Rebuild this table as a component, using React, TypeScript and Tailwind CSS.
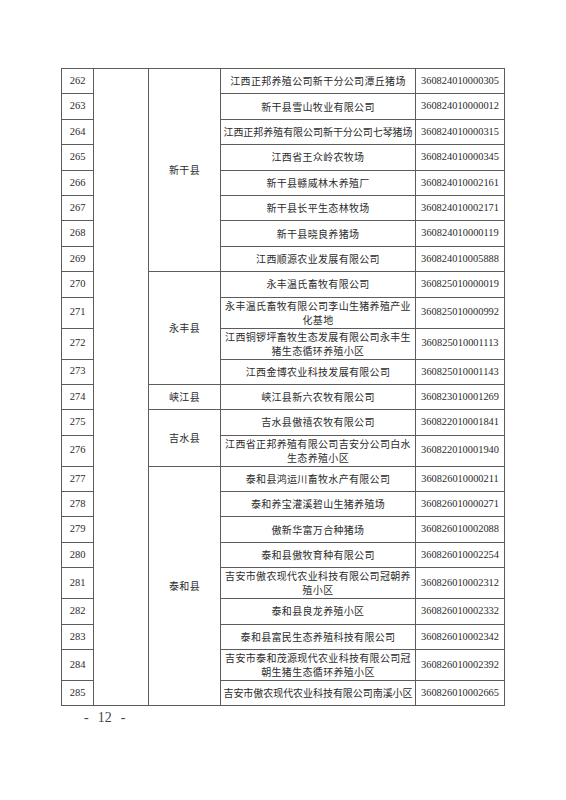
type Row = {
  no: number;
  name: string[];
  code: string;
  tight?: boolean;
};

type Group = {
  county: string;
  rows: Row[];
};

const groups: Group[] = [
  {
    county: "新干县",
    rows: [
      { no: 262, name: ["江西正邦养殖公司新干分公司潭丘猪场"], code: "360824010000305" },
      { no: 263, name: ["新干县雪山牧业有限公司"], code: "360824010000012" },
      { no: 264, name: ["江西正邦养殖有限公司新干分公司七琴猪场"], code: "360824010000315", tight: true },
      { no: 265, name: ["江西省王众岭农牧场"], code: "360824010000345" },
      { no: 266, name: ["新干县赣威林木养殖厂"], code: "360824010002161" },
      { no: 267, name: ["新干县长平生态林牧场"], code: "360824010002171" },
      { no: 268, name: ["新干县晓良养猪场"], code: "360824010000119" },
      { no: 269, name: ["江西顺源农业发展有限公司"], code: "360824010005888" },
    ],
  },
  {
    county: "永丰县",
    rows: [
      { no: 270, name: ["永丰温氏畜牧有限公司"], code: "360825010000019" },
      { no: 271, name: ["永丰温氏畜牧有限公司李山生猪养殖产业", "化基地"], code: "360825010000992" },
      { no: 272, name: ["江西铜锣坪畜牧生态发展有限公司永丰生", "猪生态循环养殖小区"], code: "360825010001113" },
      { no: 273, name: ["江西金博农业科技发展有限公司"], code: "360825010001143" },
    ],
  },
  {
    county: "峡江县",
    rows: [{ no: 274, name: ["峡江县新六农牧有限公司"], code: "360823010001269" }],
  },
  {
    county: "吉水县",
    rows: [
      { no: 275, name: ["吉水县傲禧农牧有限公司"], code: "360822010001841" },
      { no: 276, name: ["江西省正邦养殖有限公司吉安分公司白水", "生态养殖小区"], code: "360822010001940" },
    ],
  },
  {
    county: "泰和县",
    rows: [
      { no: 277, name: ["泰和县鸿运川畜牧水产有限公司"], code: "360826010000211" },
      { no: 278, name: ["泰和养宝灌溪碧山生猪养殖场"], code: "360826010000271" },
      { no: 279, name: ["傲新华富万合种猪场"], code: "360826010002088" },
      { no: 280, name: ["泰和县傲牧育种有限公司"], code: "360826010002254" },
      { no: 281, name: ["吉安市傲农现代农业科技有限公司冠朝养", "殖小区"], code: "360826010002312" },
      { no: 282, name: ["泰和县良龙养殖小区"], code: "360826010002332" },
      { no: 283, name: ["泰和县富民生态养殖科技有限公司"], code: "360826010002342" },
      { no: 284, name: ["吉安市泰和茂源现代农业科技有限公司冠", "朝生猪生态循环养殖小区"], code: "360826010002392" },
      { no: 285, name: ["吉安市傲农现代农业科技有限公司南溪小区"], code: "360826010002665", tight: true },
    ],
  },
];

const totalRows = groups.reduce((n, g) => n + g.rows.length, 0);

const cjk = "font-['Noto_Sans_CJK_SC','Noto_Sans_CJK_JP',sans-serif]";
const serif = "font-['Liberation_Serif','Times_New_Roman',serif]";
const cell = "border border-[#5c5c5c] p-0 text-center align-middle";

export default function App() {
  let first = true;

  return (
    <main className="w-[566px] h-[800px] bg-white text-[#2b2b2b] pl-[61px] pt-[68px]">
      <table className="table-fixed border-collapse w-[443px]">
        <colgroup>
          <col className="w-[32px]" />
          <col className="w-[55px]" />
          <col className="w-[72px]" />
          <col className="w-[195px]" />
          <col className="w-[89px]" />
        </colgroup>
        <tbody>
          {groups.map((g) =>
            g.rows.map((r, i) => {
              const isFirst = first;
              first = false;
              const double = r.name.length > 1;
              return (
                <tr key={r.no} className={double ? "h-[31px]" : "h-[25.4px]"}>
                  <td className={`${cell} ${serif} text-[10.5px] leading-none`}>{r.no}</td>
                  {isFirst && <td className={cell} rowSpan={totalRows} />}
                  {i === 0 && (
                    <td
                      className={`${cell} ${cjk} text-[10px] tracking-[0.4px] leading-none`}
                      rowSpan={g.rows.length}
                    >
                      {g.county}
                    </td>
                  )}
                  <td
                    className={`${cell} ${cjk} text-[10px] leading-[14px] ${
                      r.tight ? "tracking-[-0.05px]" : "tracking-[0.32px]"
                    }`}
                  >
                    {r.name.map((line, k) => (
                      <div key={k} className="whitespace-nowrap">
                        {line}
                      </div>
                    ))}
                  </td>
                  <td className={`${cell} ${serif} text-[10.4px] leading-none`}>{r.code}</td>
                </tr>
              );
            })
          )}
        </tbody>
      </table>
      <div className={`${serif} flex gap-[9px] items-baseline text-[14px] text-[#444] mt-[1px] ml-[23px]`}>
        <span>-</span>
        <span>12</span>
        <span>-</span>
      </div>
    </main>
  );
}
